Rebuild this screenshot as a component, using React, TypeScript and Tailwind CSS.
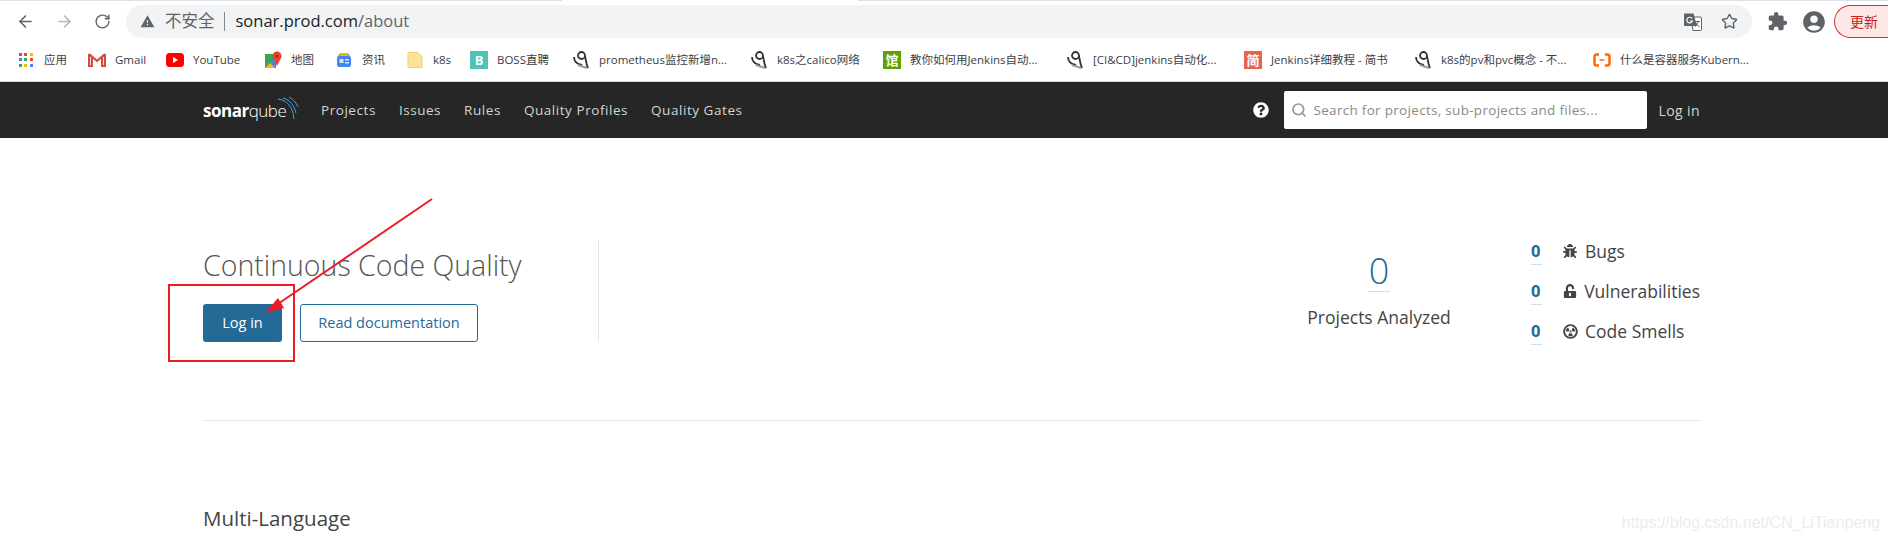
import { ReactNode } from 'react';
import { ArrowLeft, ArrowRight, RotateCw, Search, Star } from 'lucide-react';
import { FaBug, FaQuestionCircle, FaRadiationAlt, FaUnlockAlt } from 'react-icons/fa';
import { MdAccountCircle, MdExtension, MdWarning } from 'react-icons/md';

const FONT = "font-['Open_Sans','Noto_Sans_CJK_SC',sans-serif]";

function AppsIcon() {
  const colors = ['#ea4335', '#ea4335', '#fbbc05', '#4285f4', '#34a853', '#ea4335', '#34a853', '#fbbc05', '#4285f4'];
  return (
    <div className="grid grid-cols-3 gap-[2px] w-[14px] h-[14px]">
      {colors.map((c, i) => (
        <span key={i} style={{ backgroundColor: c }} className="block w-[3px] h-[3px]" />
      ))}
    </div>
  );
}

function GmailIcon() {
  return (
    <svg viewBox="0 0 18 14" className="w-[18px] h-[14px]">
      <path d="M1 1v12h3V5l5 4 5-4v8h3V1h-2L9 6 3 1z" fill="#e4e4e4" />
      <path d="M1 1v12h3V4.500M17 1v12h-3V4.500M1 1l8 7 8-7" fill="none" stroke="#d54c3f" strokeWidth="2" />
    </svg>
  );
}

function YoutubeIcon() {
  return (
    <svg viewBox="0 0 18 14" className="w-[18px] h-[14px]">
      <rect width="18" height="14" y="0" rx="3.500" fill="#f00" />
      <path d="M7 4l5 3-5 3z" fill="#fff" />
    </svg>
  );
}

function MapsIcon() {
  return (
    <svg viewBox="0 0 18 18" className="w-[18px] h-[18px]">
      <path d="M1 3h11v14H1z" fill="#34a853" />
      <path d="M1 17 12 6v11z" fill="#4285f4" />
      <path d="M1 17l5-5 5 5z" fill="#fbbc05" />
      <circle cx="13" cy="5" r="4.500" fill="#ea4335" />
      <path d="M9 7l4 8 4-8z" fill="#ea4335" />
      <circle cx="13" cy="5" r="1.500" fill="#a52714" />
    </svg>
  );
}

function NewsIcon() {
  return (
    <svg viewBox="0 0 16 16" className="w-4 h-4">
      <path d="M3 2h10l1 3H2z" fill="#6aa84f" />
      <path d="M4 1h8v3H4z" fill="#f4b400" />
      <rect x="1" y="4" width="14" height="11" rx="2" fill="#4285f4" />
      <rect x="3.500" y="7" width="4" height="4" fill="#cfe0fc" />
      <rect x="9" y="7" width="4" height="1.500" fill="#cfe0fc" />
      <rect x="9" y="10" width="4" height="1.500" fill="#cfe0fc" />
    </svg>
  );
}

function FolderIcon() {
  return (
    <svg viewBox="0 0 16 18" className="w-4 h-[18px]">
      <path d="M1 1.500h10l4 4v11H1z" fill="#fde293" stroke="#f0cf6c" strokeWidth="1" />
    </svg>
  );
}

function SquiggleIcon() {
  return (
    <svg viewBox="0 0 18 20" className="w-[18px] h-5">
      <path d="M2 7c0 4 3 7 8 8" fill="none" stroke="#333" strokeWidth="1.800" />
      <circle cx="9.500" cy="5.500" r="3.500" fill="none" stroke="#333" strokeWidth="1.800" />
      <path d="M13 6c1 4 1 8 3 12" fill="none" stroke="#333" strokeWidth="1.800" />
      <path d="M6 15c3 1 6 2 9 3" fill="none" stroke="#999" strokeWidth="2" />
    </svg>
  );
}

function LetterIcon({ bg, text }: { bg: string; text: string }) {
  return (
    <div className={`w-[18px] h-[18px] flex items-center justify-center text-white text-[13px] font-bold leading-none ${bg}`}>
      {text}
    </div>
  );
}

function BracketIcon() {
  return (
    <svg viewBox="0 0 18 14" className="w-[18px] h-[14px]">
      <path d="M6 1.500H3.500a2 2 0 0 0-2 2v7a2 2 0 0 0 2 2H6M12 1.500h2.500a2 2 0 0 1 2 2v7a2 2 0 0 1-2 2H12" fill="none" stroke="#ff6a00" strokeWidth="2.500" />
      <path d="M6.500 7h5" stroke="#ff6a00" strokeWidth="1.500" />
    </svg>
  );
}

function TranslateIcon() {
  return (
    <svg viewBox="0 0 18 18" className="w-[18px] h-[18px]">
      <path d="M7 4h9.500a1 1 0 0 1 1 1v11.500a1 1 0 0 1-1 1H9z" fill="#fff" stroke="#5f6368" strokeWidth="1" />
      <path d="M1 .500h8.500L13 13H1a1 1 0 0 1-1-1V1.500a1 1 0 0 1 1-1z" fill="#5f6368" />
      <path d="M8 5.500A2.800 2.800 0 1 0 8.300 8H6" fill="none" stroke="#fff" strokeWidth="1.200" />
      <path d="M11.500 8.500H16M14 8v1c-.3 2-1.500 3.500-3 4.500M12 10c.6 1.500 2 3 3.500 3.500" fill="none" stroke="#5f6368" strokeWidth="1" />
    </svg>
  );
}

const bookmarks: { icon: ReactNode; label: string; width: string }[] = [
  { icon: <AppsIcon />, label: '应用', width: 'w-[71px]' },
  { icon: <GmailIcon />, label: 'Gmail', width: 'w-[78px]' },
  { icon: <YoutubeIcon />, label: 'YouTube', width: 'w-[98px]' },
  { icon: <MapsIcon />, label: '地图', width: 'w-[71px]' },
  { icon: <NewsIcon />, label: '资讯', width: 'w-[71px]' },
  { icon: <FolderIcon />, label: 'k8s', width: 'w-[64px]' },
  { icon: <LetterIcon bg="bg-[#4fc3b8]" text="B" />, label: 'BOSS直聘', width: 'w-[102px]' },
  { icon: <SquiggleIcon />, label: 'prometheus监控新增n...', width: 'w-[178px]' },
  { icon: <SquiggleIcon />, label: 'k8s之calico网络', width: 'w-[133px]' },
  { icon: <LetterIcon bg="bg-[#5aa300]" text="馆" />, label: '教你如何用Jenkins自动...', width: 'w-[183px]' },
  { icon: <SquiggleIcon />, label: '[CI&CD]jenkins自动化...', width: 'w-[178px]' },
  { icon: <LetterIcon bg="bg-[#e9624f]" text="简" />, label: 'Jenkins详细教程 - 简书', width: 'w-[170px]' },
  { icon: <SquiggleIcon />, label: 'k8s的pv和pvc概念 - 不...', width: 'w-[179px]' },
  { icon: <BracketIcon />, label: '什么是容器服务Kubern...', width: 'w-[170px]' },
];

const navLinks = ['Projects', 'Issues', 'Rules', 'Quality Profiles', 'Quality Gates'];

const measures = [
  { label: 'Bugs', icon: <FaBug className="w-[14px] h-[14px]" /> },
  { label: 'Vulnerabilities', icon: <FaUnlockAlt className="w-[14px] h-[14px]" /> },
  { label: 'Code Smells', icon: <FaRadiationAlt className="w-[15px] h-[15px]" /> },
];

function BrowserChrome() {
  return (
    <div className="h-[82px] bg-white border-b border-[#d9d9d9]">
      <div className="h-[43px] flex items-start pt-[5px]">
        <div className="w-[126px] h-[33px] flex items-center text-[#5f6368] pl-[16px] gap-[20px]">
          <ArrowLeft className="w-[19px] h-[19px]" />
          <ArrowRight className="w-[19px] h-[19px] text-[#b4b6b9]" />
          <RotateCw className="w-[17px] h-[17px]" />
        </div>
        <div className="w-[1626px] h-[33px] rounded-full bg-[#f1f3f4] flex items-center pl-[14px] pr-[14px]">
          <MdWarning className="w-[15px] h-[15px] text-[#5f6368]" />
          <span className="ml-[10px] text-[16.500px] text-[#5f6368]">不安全</span>
          <span className="ml-[9px] mr-[11px] w-px h-[19px] bg-[#888]" />
          <span className="text-[16.500px] text-[#202124]">sonar.prod.com<span className="text-[#5f6368]">/about</span></span>
          <div className="ml-auto flex items-center gap-[19px]">
            <TranslateIcon />
            <Star className="w-[17px] h-[17px] text-[#5f6368]" />
          </div>
        </div>
        <div className="h-[33px] flex items-center ml-[15px] text-[#5f6368] gap-[13px]">
          <MdExtension className="w-[21px] h-[21px]" />
          <MdAccountCircle className="w-[26px] h-[26px]" />
        </div>
        <div className="ml-[7px] h-[33px] flex-1 rounded-l-full border border-r-0 border-[#d93025] bg-[#fce8e6] text-[#c5221f] text-[14px] flex items-center pl-[15px]">
          更新
        </div>
      </div>
      <div className="h-[34px] flex items-center pl-[17px] text-[11.500px] text-[#3c4043] whitespace-nowrap overflow-hidden">
        {bookmarks.map((b) => (
          <div key={b.label} className={`flex items-center gap-[9px] shrink-0 ${b.width}`}>
            <div className="w-[18px] h-5 flex items-center justify-center shrink-0">{b.icon}</div>
            <span>{b.label}</span>
          </div>
        ))}
      </div>
    </div>
  );
}

function SonarLogo() {
  return (
    <div className="relative w-[96px] h-[28px] flex items-center text-white text-[17px] leading-none tracking-[-0.5px]">
      <span className="font-bold">sonar</span>
      <span className="font-light">qube</span>
      <svg viewBox="0 0 24 24" className="absolute right-0 top-0 w-[24px] h-[24px]" fill="none" stroke="#4b9fd5" strokeWidth="1">
        <path d="M3 3c9 1 15 8 16 20" />
        <path d="M8 2c7 2 11 7 13 15" />
        <path d="M14 1c4 2 7 5 9 10" />
      </svg>
    </div>
  );
}

function NavBar() {
  return (
    <div className="h-[56px] bg-[#262626] flex items-center pl-[203px] pr-[188px]">
      <SonarLogo />
      <nav className="flex items-center gap-[23px] ml-[22px] text-[13.500px] tracking-[0.55px] text-[#d4d4d4]">
        {navLinks.map((l) => (
          <span key={l}>{l}</span>
        ))}
      </nav>
      <FaQuestionCircle className="ml-auto w-[16px] h-[16px] text-white" />
      <div className="ml-[15px] w-[363px] h-[38px] bg-white rounded-[2px] flex items-center pl-[7px] text-[13.500px] tracking-[0.3px] text-[#8a8a8a]">
        <Search className="w-[16px] h-[16px] mr-[7px] text-[#999]" strokeWidth={2.500} />
        Search for projects, sub-projects and files...
      </div>
      <span className="ml-[12px] text-[14px] tracking-[0.4px] text-[#d4d4d4]">Log in</span>
    </div>
  );
}

function Hero() {
  return (
    <div className="flex items-start">
      <div className="w-[396px] h-[102px] border-r border-[#e6e6e6] mr-0 flex flex-col justify-end">
        <h1 className="text-[28.500px] font-light leading-[40px] text-[#555] mb-[19px] whitespace-nowrap">Continuous Code Quality</h1>
        <div className="flex gap-[18px]">
          <button className="w-[79px] h-[38px] rounded-[3px] bg-[#236a97] text-white text-[14.500px]">Log in</button>
          <button className="w-[178px] h-[38px] rounded-[3px] border border-[#236a97] text-[#236a97] text-[14.500px]">Read documentation</button>
        </div>
      </div>
      <div className="ml-auto flex items-start">
        <div className="w-[146px] flex flex-col items-center pt-[9px]">
          <span className="text-[36px] leading-[44px] text-[#236a97] border-b border-[#cde0ec] h-[43px] px-px font-light">0</span>
          <span className="mt-[13px] text-[17.500px] leading-[24px] text-[#444]">Projects Analyzed</span>
        </div>
        <div className="ml-[79px] w-[169px] flex flex-col -mt-[4px] gap-[10px]">
          {measures.map((m) => (
            <div key={m.label} className="h-[30px] flex items-center">
              <span className="w-[11px] text-[16.500px] leading-[26px] h-[27px] font-bold text-[#236a97] border-b border-[#cde0ec]">0</span>
              <span className="ml-[21px] w-[22px] text-[#444] flex justify-start">{m.icon}</span>
              <span className="text-[17.500px] text-[#444]">{m.label}</span>
            </div>
          ))}
        </div>
      </div>
    </div>
  );
}

export default function App() {
  return (
    <div className={`relative w-[1888px] h-[543px] overflow-hidden bg-white ${FONT}`}>
      <BrowserChrome />
      <NavBar />
      <main className="px-[188px] pl-[203px] pt-[102px]">
        <Hero />
        <hr className="mt-[74px] border-[#e6e6e6]" />
        <h2 className="mt-[84px] text-[20.500px] leading-[26px] text-[#444]">Multi-Language</h2>
      </main>

      {/* tab strip remains along the top edge */}
      <div className="absolute left-0 top-0 w-[562px] h-px bg-[#dee1e6]" />
      <div className="absolute left-[858px] right-0 top-0 h-px bg-[#dee1e6]" />

      {/* red annotation over the page */}
      <svg className="absolute left-0 top-0 w-[1888px] h-[543px] pointer-events-none" viewBox="0 0 1888 543" fill="none">
        <rect x="169" y="285" width="125" height="76" stroke="#ed1c24" strokeWidth="2" />
        <path d="M432 199 272 308" stroke="#ed1c24" strokeWidth="2" />
        <path d="M265 313 278 298 284 308z" fill="#ed1c24" />
      </svg>

      <div className="absolute right-[8px] bottom-[8px] font-['Liberation_Sans',sans-serif] text-[16px] text-[#ececec]">
        https://blog.csdn.net/CN_LiTianpeng
      </div>
    </div>
  );
}
